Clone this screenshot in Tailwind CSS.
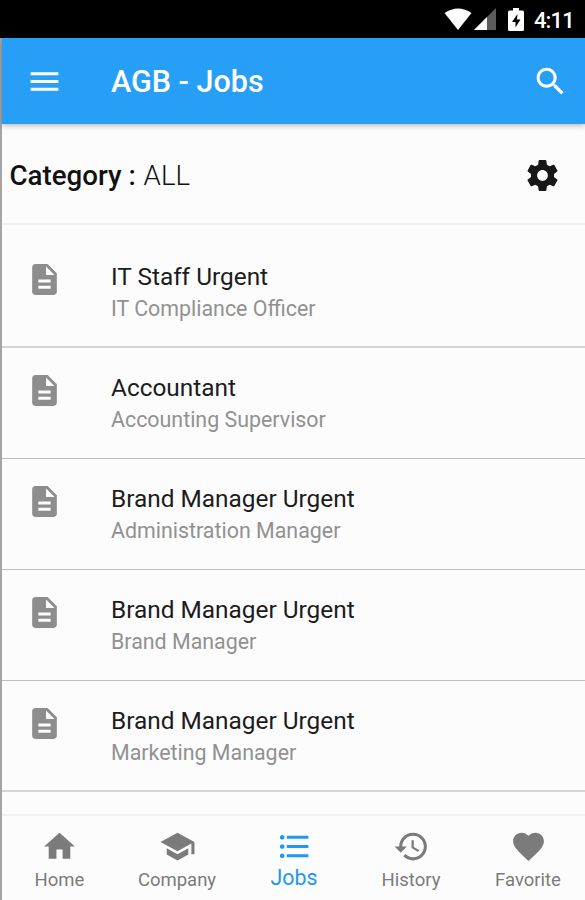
<!DOCTYPE html>
<html lang="en">
<head>
    <meta charset="UTF-8">
    <title>AGB - Jobs</title>
    <script src="https://cdn.jsdelivr.net/npm/@tailwindcss/browser@4"></script>
</head>
<body class="bg-[#fcfcfc] font-['Roboto',sans-serif]">
    <div class="h-[900px] w-[585px] flex overflow-hidden">
        <div class="w-[2px] shrink-0 bg-[#a5a5a7]"></div>
        <div class="flex-1 min-w-0 flex flex-col">

            <!-- Status bar -->
            <div class="h-[38px] shrink-0 -ml-[2px] bg-black text-white flex items-center justify-end pr-[11px]">
                <svg class="w-[28px] h-[22px]" viewBox="0 0 28 22" fill="#fff"><path d="M0.5 5Q14 -4 27.5 5L14 22z"/></svg>
                <svg class="w-[22px] h-[22px] ml-[2px]" viewBox="0 0 22 22"><path d="M22 0v22H0z" fill="#5c5c5c"/><path d="M13 9v13H0z" fill="#fff"/></svg>
                <svg class="w-[16px] h-[23px] ml-[12px]" viewBox="0 0 16 23"><path d="M5 0h6v2.500h3.500Q16 2.500 16 4v17.500Q16 23 14.500 23h-13Q0 23 0 21.500V4Q0 2.500 1.500 2.500H5z" fill="#fff"/><path d="M9.500 6L4 14h3.500v5.500L12.500 11.500H9z" fill="#000"/></svg>
                <span class="ml-[10px] mt-[4px] text-[22px] leading-none font-medium tracking-[-0.8px]">4:11</span>
            </div>

            <!-- App bar -->
            <div class="h-[86px] shrink-0 relative bg-[#279ff6] text-white flex items-center pl-[23.500px] pr-[16.500px] shadow-[0_2px_5px_rgba(0,0,0,0.25)]">
                <svg class="w-[37px] h-[37px]" viewBox="0 0 24 24" fill="currentColor"><path d="M3 18h18v-2H3v2zm0-5h18v-2H3v2zm0-7v2h18V6H3z"/></svg>
                <h1 class="ml-[48.500px] mt-[3px] flex-1 text-[30.500px] leading-none font-medium">AGB - Jobs</h1>
                <svg class="w-[37px] h-[37px]" viewBox="0 0 24 24" fill="currentColor"><path d="M15.500 14h-.79l-.28-.27C15.410 12.590 16 11.110 16 9.500 16 5.910 13.090 3 9.500 3S3 5.910 3 9.500 5.910 16 9.500 16c1.610 0 3.090-.59 4.230-1.570l.27.28v.79l5 4.990L20.490 19l-4.990-5zm-6 0C7.010 14 5 11.990 5 9.500S7.010 5 9.500 5 14 7.010 14 9.500 11.990 14 9.500 14z"/></svg>
            </div>

            <!-- Category filter -->
            <div class="h-[101px] shrink-0 border-b-2 border-[#f0f0f0] flex items-center justify-between pl-[7.500px] pr-[24px] pt-[3px] text-[#111]">
                <p class="mt-[2px] text-[27.700px] leading-none"><span class="font-medium">Category :</span> <span class="ml-px font-light">ALL</span></p>
                <svg class="w-[37px] h-[37px]" viewBox="0 0 24 24" fill="#171717"><path d="M19.430 12.980c.04-.32.07-.64.07-.98s-.03-.66-.07-.98l2.110-1.650c.19-.15.24-.42.12-.64l-2-3.460c-.12-.22-.39-.3-.61-.22l-2.490 1c-.52-.4-1.080-.73-1.690-.98l-.38-2.650C14.460 2.180 14.250 2 14 2h-4c-.25 0-.46.18-.49.42l-.38 2.650c-.61.25-1.170.59-1.690.98l-2.490-1c-.23-.09-.49 0-.61.22l-2 3.460c-.13.22-.07.49.12.64l2.110 1.650c-.04.32-.07.65-.07.98s.03.66.07.98l-2.110 1.650c-.19.15-.24.42-.12.64l2 3.460c.12.22.39.3.61.22l2.490-1c.52.4 1.080.73 1.690.98l.38 2.650c.03.24.24.42.49.42h4c.25 0 .46-.18.49-.42l.38-2.650c.61-.25 1.170-.59 1.690-.98l2.490 1c.23.09.49 0 .61-.22l2-3.460c.12-.22.07-.49-.12-.64l-2.110-1.650zM12 15.500c-1.930 0-3.500-1.570-3.500-3.500s1.570-3.500 3.500-3.500 3.500 1.570 3.500 3.500-1.570 3.500-3.500 3.500z"/></svg>
            </div>

            <!-- Job list -->
            <ul id="jobs" class="flex-1 min-h-0 pt-[12px] overflow-hidden"></ul>

            <!-- Bottom navigation -->
            <nav class="h-[86px] shrink-0 border-t-2 border-[#f1f1f1] grid grid-cols-[115px_117px_117px_117px_117px] text-[#7b7b7b] text-[18.500px] leading-[22px] text-center">
                <a class="flex flex-col items-center pt-[12px]">
                    <svg class="w-[37px] h-[37px]" viewBox="0 0 24 24" fill="currentColor"><path d="M10 20v-6h4v6h5v-8h3L12 3 2 12h3v8z"/></svg>
                    <span class="mt-[4px]">Home</span>
                </a>
                <a class="flex flex-col items-center pt-[12px] pl-[3px]">
                    <svg class="w-[37px] h-[37px]" viewBox="0 0 24 24" fill="currentColor"><path d="M5 13.180v4L12 21l7-3.820v-4L12 17l-7-3.820zM12 3L1 9l11 6 9-4.910V17h2V9L12 3z"/></svg>
                    <span class="mt-[4px]">Company</span>
                </a>
                <a class="flex flex-col items-center pt-[12px] pl-[3px] text-[#2196f3]">
                    <svg class="w-[37px] h-[37px]" viewBox="0 0 24 24" fill="currentColor"><path d="M4 10.500c-.83 0-1.500.67-1.500 1.500s.67 1.500 1.500 1.500 1.500-.67 1.500-1.500-.67-1.500-1.500-1.500zm0-6c-.83 0-1.500.67-1.500 1.500S3.170 7.500 4 7.500 5.500 6.830 5.500 6 4.830 4.500 4 4.500zm0 12c-.83 0-1.500.68-1.500 1.500s.68 1.500 1.500 1.500 1.500-.68 1.500-1.500-.67-1.500-1.500-1.500zM7 19h14v-2H7v2zm0-6h14v-2H7v2zm0-8v2h14V5H7z"/></svg>
                    <span class="mt-[2px] text-[21.300px]">Jobs</span>
                </a>
                <a class="flex flex-col items-center pt-[12px] pl-[3px]">
                    <svg class="w-[37px] h-[37px]" viewBox="0 0 24 24" fill="currentColor"><path d="M13 3c-4.970 0-9 4.030-9 9H1l3.890 3.890.07.14L9 12H6c0-3.870 3.130-7 7-7s7 3.130 7 7-3.130 7-7 7c-1.930 0-3.680-.79-4.940-2.060l-1.420 1.420C8.270 19.990 10.510 21 13 21c4.970 0 9-4.030 9-9s-4.030-9-9-9zm-1 5v5l4.280 2.540.72-1.210-3.500-2.080V8H12z"/></svg>
                    <span class="mt-[4px]">History</span>
                </a>
                <a class="flex flex-col items-center pt-[12px] pl-[3px]">
                    <svg class="w-[37px] h-[37px]" viewBox="0 0 24 24" fill="currentColor"><path d="M12 21.350l-1.450-1.320C5.400 15.360 2 12.280 2 8.500 2 5.420 4.420 3 7.500 3c1.740 0 3.410.81 4.500 2.090C13.090 3.810 14.760 3 16.500 3 19.580 3 22 5.420 22 8.500c0 3.780-3.400 6.860-8.550 11.540L12 21.350z"/></svg>
                    <span class="mt-[4px]">Favorite</span>
                </a>
            </nav>
        </div>
    </div>

    <script>
        const jobs = [
            ['IT Staff Urgent', 'IT Compliance Officer'],
            ['Accountant', 'Accounting Supervisor'],
            ['Brand Manager Urgent', 'Administration Manager'],
            ['Brand Manager Urgent', 'Brand Manager'],
            ['Brand Manager Urgent', 'Marketing Manager']
        ];

        document.getElementById('jobs').innerHTML = jobs.map(([title, position]) => `
            <li class="h-[111px] flex border-b border-[#bfbfbf] first:border-b-2 first:border-[#d6d6d6] last:border-b-2 last:border-[#d6d6d6] pl-[23.500px] pt-[24px]">
                <svg class="w-[37px] h-[37px]" viewBox="0 0 24 24" fill="#8d8d8d"><path d="M14 2H6c-1.100 0-1.990.9-1.990 2L4 20c0 1.100.89 2 1.990 2H18c1.100 0 2-.9 2-2V8l-6-6zm2 16H8v-2h8v2zm0-4H8v-2h8v2zm-3-5V3.500L18.500 9H13z"/></svg>
                <div class="ml-[48.500px]">
                    <p class="text-[24.400px] leading-[32px] text-[#1c1c1c]">${title}</p>
                    <p class="text-[21.400px] leading-[31px] text-[#919191]">${position}</p>
                </div>
            </li>
        `).join('');
    </script>
</body>
</html>
